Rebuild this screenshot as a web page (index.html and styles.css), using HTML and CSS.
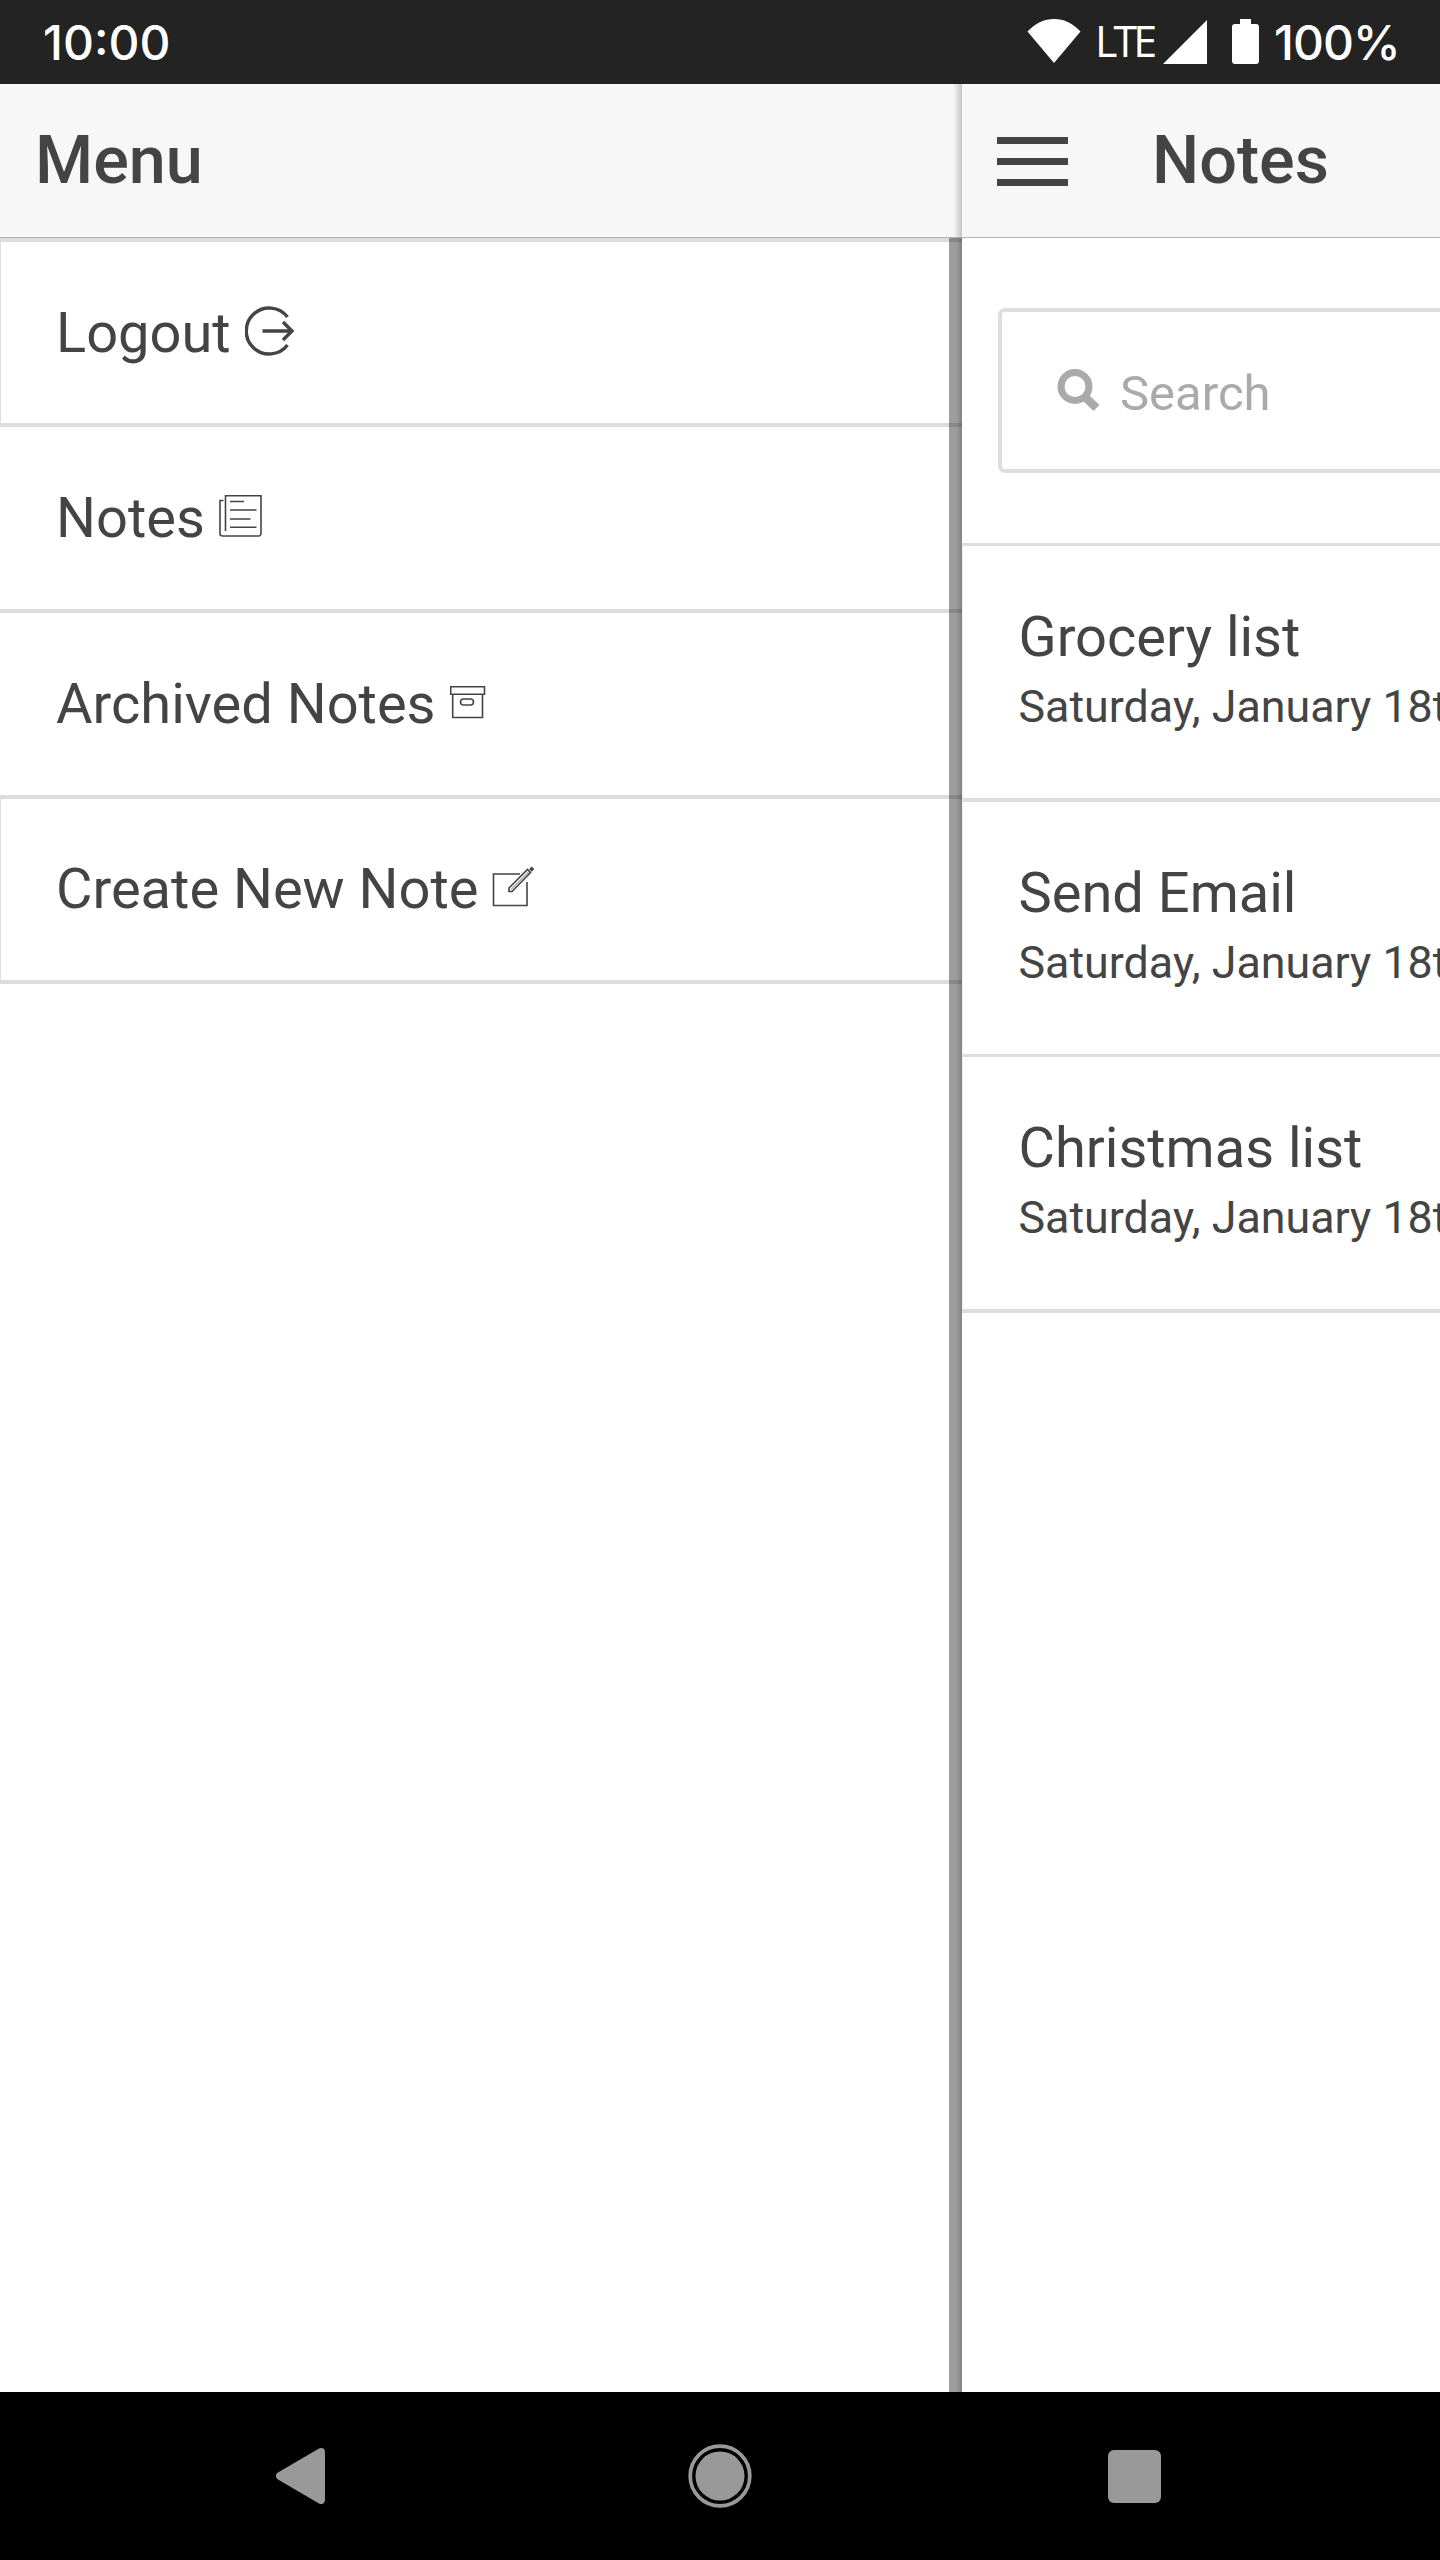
FILE: index.html
```html
<!DOCTYPE html>
<html lang="en">
<head>
<meta charset="utf-8">
<title>Notes</title>
<link rel="stylesheet" href="styles.css">
</head>
<body>
<div class="phone">
  <div class="status">
    <span class="clock">10:00</span>
    <div class="indicators">
      <svg class="wifi" width="54" height="46" viewBox="0 0 54 46"><path d="M0.5 13.5C8 5.500 17 1 27 1s19 4.500 26.500 12.500L27 45z"/></svg>
      <span class="lte">LTE</span>
      <svg class="signal" width="44" height="44" viewBox="0 0 44 44"><path d="M0 44L44 0v44z"/></svg>
      <svg class="battery" width="27" height="46" viewBox="0 0 27 46"><path d="M8 0h11v5h5a3 3 0 0 1 3 3v34a3 3 0 0 1-3 3H3a3 3 0 0 1-3-3V8a3 3 0 0 1 3-3h5z"/></svg>
      <span class="percent">100%</span>
    </div>
  </div>
  <div class="panes">
    <nav class="menu">
      <header class="bar"><h1 class="title">Menu</h1></header>
      <ul class="links">
        <li class="link edge"><span class="label">Logout</span>
          <svg class="logout" width="50" height="50" viewBox="0 0 50 50"><path d="M42.500 11A23 23 0 1 0 42.500 39M17.500 25H47M38 16l9 9-9 9"/></svg></li>
        <li class="link"><span class="label">Notes</span>
          <svg class="paper" width="43" height="42" viewBox="0 0 43 42"><path d="M6.500 36V.7H42V38.500a2.500 2.500 0 0 1-2.500 2.500H3.500A2.500 2.500 0 0 1 1 38.500V5.500H4.500M11 6.500H25M11 15H37.500M11 24H31.500M11 32.300H37.500"/></svg></li>
        <li class="link"><span class="label">Archived Notes</span>
          <svg class="box" width="36" height="33" viewBox="0 0 36 33"><path d="M.7.7H34.500V8.300H.7zM2.700 8.300V31.500H32.500V8.300M13.500 13h7a3 3 0 0 1 0 6h-7a3 3 0 0 1 0-6z"/></svg></li>
        <li class="link edge"><span class="label">Create New Note</span>
          <svg class="compose" width="43" height="41" viewBox="0 0 43 41"><path d="M28 8H1.500V39.500H35V16M17 25.500V22L35.500 3.500l3 3L20 25.500z"/><path d="M19 23.500L36.500 6" stroke-width=".8"/><path d="M38.500 1.800l2.500 2.700" stroke-width="3.500"/></svg></li>
      </ul>
      <div class="shade"></div>
      <div class="bar-shade"></div>
    </nav>
    <main class="content">
      <header class="bar">
        <svg class="burger" width="71" height="49" viewBox="0 0 71 49"><path d="M0 0h71v7H0zM0 21h71v7H0zM0 42h71v7H0z"/></svg>
        <h1 class="title">Notes</h1>
      </header>
      <div class="search">
        <svg class="lens" width="43" height="43" viewBox="0 0 43 43"><circle cx="18" cy="17.500" r="14"/><path d="M28 28l11.500 11"/></svg>
        <span class="hint">Search</span>
      </div>
      <ul class="notes">
        <li class="note"><h2 class="name">Grocery list</h2><p class="date">Saturday, January 18th</p></li>
        <li class="note"><h2 class="name">Send Email</h2><p class="date">Saturday, January 18th</p></li>
        <li class="note"><h2 class="name">Christmas list</h2><p class="date">Saturday, January 18th</p></li>
      </ul>
    </main>
  </div>
  <div class="system">
    <svg width="49" height="56" viewBox="0 0 49 56"><path d="M45 4L4 28l41 24z" stroke="#999" stroke-width="8" stroke-linejoin="round"/></svg>
    <svg width="64" height="64" viewBox="0 0 64 64"><circle cx="32" cy="32" r="24.500"/><circle cx="32" cy="32" r="29.800" fill="none" stroke="#999" stroke-width="3.700"/></svg>
    <svg width="53" height="53" viewBox="0 0 53 53"><rect width="53" height="53" rx="6"/></svg>
  </div>
</div>
</body>
</html>
```
FILE: styles.css
```css
* { box-sizing: border-box; }
body { margin: 0; font-family: Roboto, "Liberation Sans", sans-serif; color: #444; background: #fff; }
h1, h2, p, ul { margin: 0; padding: 0; list-style: none; font-weight: 400; }
svg { display: block; flex: none; }
.phone { width: 1440px; height: 2560px; display: flex; flex-direction: column; overflow: hidden; }

.status { height: 84px; flex: none; background: #232323; color: #fff; display: flex; justify-content: space-between; padding: 0 0 0 43px; }
.status svg { fill: #fff; }
.clock, .percent { font: 500 48px/86px Inter, sans-serif; white-space: nowrap; }
.percent { letter-spacing: -1px; }
.indicators { display: flex; align-items: flex-start; width: 413px; flex: none; }
.wifi { margin: 18px 14px 0 0; }
.lte { font: 400 43px/82px "Open Sans", sans-serif; width: 61px; letter-spacing: -4px; }
.signal { margin: 20px 25px 0 7px; }
.battery { margin: 19px 15px 0 0; }

.panes { flex: 1; display: flex; min-height: 0; }
.menu { width: 962px; flex: none; position: relative; }
.content { flex: 1; min-width: 0; overflow: hidden; }
.bar { height: 154px; background: #f7f7f7; border-bottom: 1px solid #b2b2b2; display: flex; align-items: center; padding: 0 35px; }
.title { font-size: 66.500px; line-height: 153px; font-weight: 500; }
.link { height: 186px; border-top: 4px solid #ddd; display: flex; align-items: flex-start; padding-left: 56px; }
.link:first-child { height: 185px; }
.link:last-child { height: 189px; border-bottom: 4px solid #ddd; }
.edge { border-left: 1px solid #ddd; padding-left: 55px; }
.label { font-size: 56px; line-height: 182px; white-space: nowrap; }
.link:last-child .label { line-height: 180px; }
.link svg { fill: none; stroke: #444; stroke-width: 1.600; }
.link .logout { stroke-width: 3.400; margin: 64px 0 0 14px; }
.paper { margin: 68px 0 0 14px; }
.box { margin: 73px 0 0 14px; }
.compose { margin: 67px 0 0 13px; }
.shade { position: absolute; left: 949px; top: 154px; bottom: 0; width: 13px; background: linear-gradient(90deg, rgba(0,0,0,.38) 0, rgba(0,0,0,.39) 55%, rgba(0,0,0,.49) 100%); }
.bar-shade { position: absolute; left: 953px; top: 0; height: 153px; width: 9px; background: linear-gradient(90deg, rgba(0,0,0,0), rgba(0,0,0,.2)); }

.burger { fill: #444; margin: 1px 84px 0 0; }
.search { margin: 70px -40px 70px 36px; height: 165px; border: 4px solid #ddd; border-radius: 7px; display: flex; align-items: flex-start; padding-left: 55px; }
.lens { margin-top: 57px; fill: none; stroke: #aaa; stroke-width: 7; }
.lens path { stroke-width: 8.500; }
.hint { font-size: 49px; line-height: 163px; color: #aaa; margin-left: 20px; }
.note { height: 255.300px; border-top: 3.500px solid #ddd; border-left: 1px solid #eee; padding: 56px 0 0 55.500px; overflow: hidden; }
.note:nth-child(2) { border-top-width: 4px; }
.note:last-child { height: 259.300px; border-bottom: 4px solid #ddd; }
.name { font-size: 56px; line-height: 70px; }
.date { font-size: 44.800px; line-height: 69px; white-space: nowrap; }

.system { height: 168px; flex: none; background: #000; display: flex; align-items: center; padding-left: 276px; }
.system svg { fill: #999; }
.system svg:nth-child(2) { margin: 0 356px 0 363px; }
```
